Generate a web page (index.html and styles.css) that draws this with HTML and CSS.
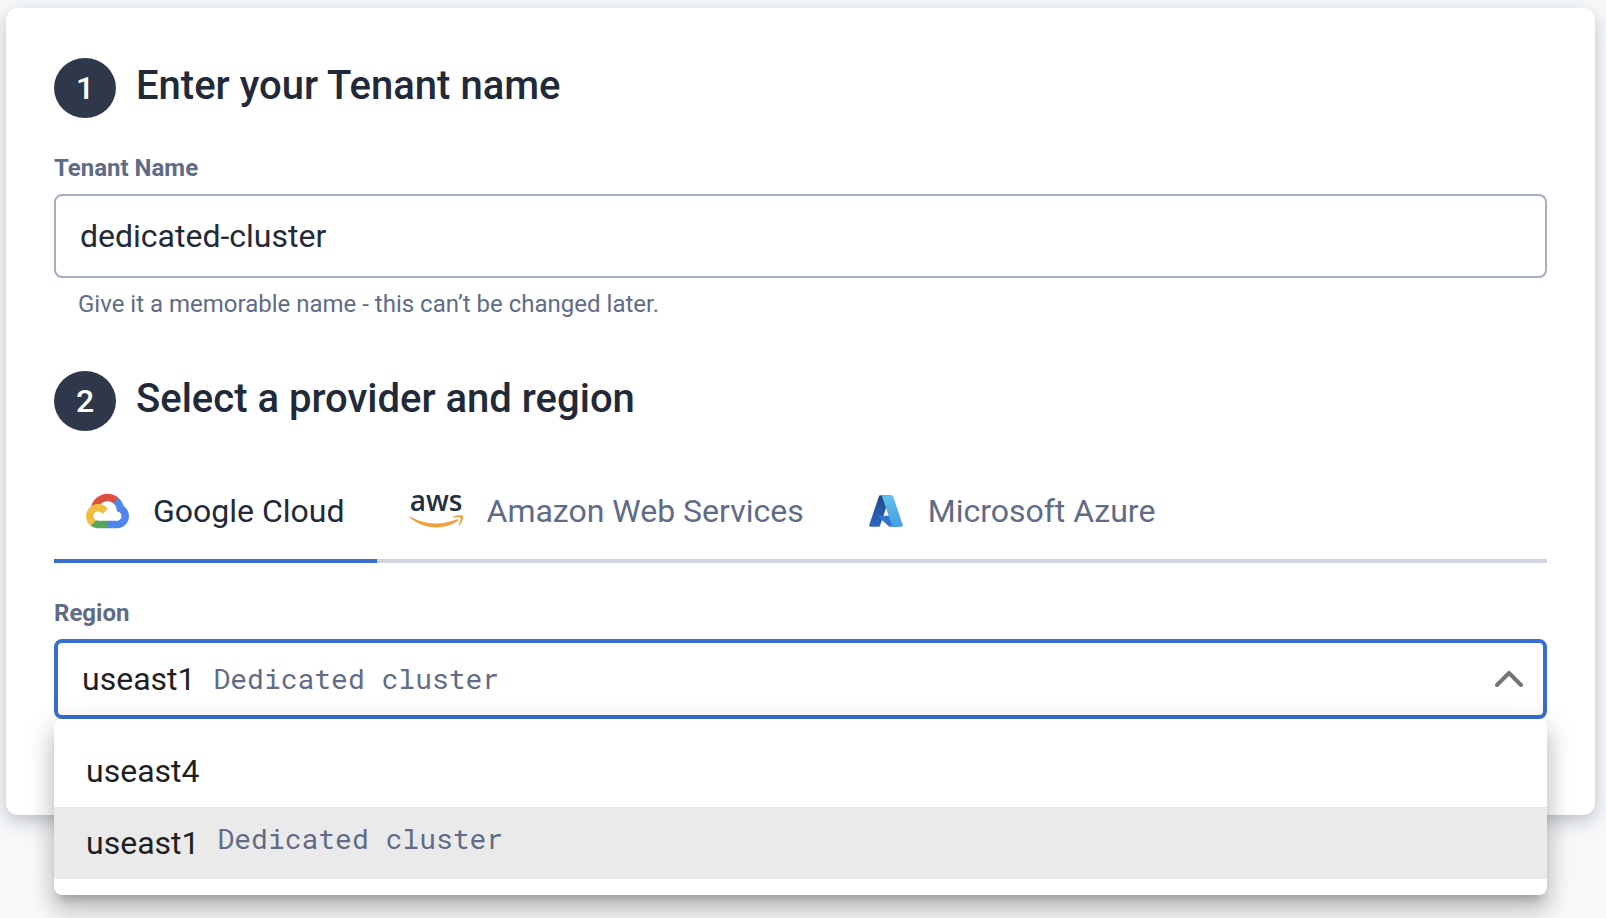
FILE: index.html
```html
<!DOCTYPE html>
<html lang="en">
<head>
<meta charset="utf-8">
<meta name="viewport" content="width=device-width, initial-scale=1">
<title>Create Tenant</title>
<link rel="stylesheet" href="styles.css">
</head>
<body>
<main class="card">
  <section class="step">
    <header class="step-header">
      <span class="step-number">1</span>
      <h2 class="step-title">Enter your Tenant name</h2>
    </header>
    <div class="field">
      <label class="label" for="tenant-name">Tenant Name</label>
      <input class="input" id="tenant-name" type="text" value="dedicated-cluster" aria-describedby="tenant-help">
      <p class="help" id="tenant-help">Give it a memorable name - this can’t be changed later.</p>
    </div>
  </section>

  <section class="step">
    <header class="step-header">
      <span class="step-number">2</span>
      <h2 class="step-title">Select a provider and region</h2>
    </header>
    <div class="tabs" role="tablist">
      <button class="tab tab-active" type="button" role="tab" aria-selected="true">
        <svg class="logo-google" viewBox="0 0 256 206" aria-hidden="true">
          <path fill="#db5140" d="M170.25 56.82 192.5 34.57 193.99 25.2C153.44-11.68 88.98-7.5 52.42 33.92 42.27 45.42 34.73 59.76 30.72 74.57L38.69 73.45 83.19 66.11 86.63 62.6C106.42 40.85 139.9 37.93 162.76 56.43Z"/>
          <path fill="#5086ec" d="M224.2 73.92C219.09 55.08 208.59 38.15 193.99 25.2L162.76 56.43C175.94 67.2 183.46 83.44 183.13 100.47V106.01C198.49 106.01 210.93 118.45 210.93 133.81 210.93 149.16 198.49 161.29 183.13 161.29H127.46L122 167.22V200.56L127.46 205.8H183.13C223.06 206.11 255.69 174.3 256 134.37 256.19 110.17 244.25 87.48 224.2 73.92Z"/>
          <path fill="#58a55d" d="M71.87 205.8H127.46V161.29H71.87C67.91 161.29 64.07 160.44 60.47 158.79L52.58 161.21 30.18 183.46 28.22 191.04C40.79 200.53 56.12 205.86 71.87 205.8Z"/>
          <path fill="#f2be42" d="M71.87 61.43C31.94 61.66-.24 94.23 0 134.16 .13 156.46 10.55 177.45 28.22 191.04L60.47 158.79C46.48 152.47 40.26 136.01 46.58 122.02 52.9 108.03 69.37 101.81 83.36 108.13 89.52 110.91 94.46 115.85 97.25 122.02L129.49 89.77C115.77 71.83 94.45 61.34 71.87 61.43Z"/>
        </svg>
        <span>Google Cloud</span>
      </button>
      <button class="tab" type="button" role="tab" aria-selected="false">
        <svg class="logo-aws" viewBox="0 -16 54 66" aria-hidden="true">
          <text class="aws-text" x="27" y="17" text-anchor="middle">aws</text>
          <g fill="#f2a03b" transform="translate(0 1) scale(.179)">
            <path d="M273.5 143.7c-32.9 24.3-80.7 37.2-121.8 37.2-57.6 0-109.5-21.3-148.7-56.7-3.1-2.8-.3-6.6 3.4-4.4 42.4 24.6 94.7 39.5 148.8 39.5 36.5 0 76.6-7.6 113.5-23.2 5.5-2.5 10.2 3.6 4.8 7.6z"/>
            <path d="M287.2 128.1c-4.2-5.4-27.8-2.6-38.5-1.3-3.2.4-3.7-2.4-.8-4.5 18.8-13.2 49.7-9.4 53.3-5 3.6 4.5-1 35.4-18.6 50.2-2.7 2.3-5.3 1.1-4.1-1.9 4-9.9 12.9-32.2 8.7-37.5z"/>
          </g>
        </svg>
        <span>Amazon Web Services</span>
      </button>
      <button class="tab" type="button" role="tab" aria-selected="false">
        <svg class="logo-azure" viewBox="4 6 88 84" aria-hidden="true">
          <defs>
            <linearGradient id="azure-left" x1="43" y1="13" x2="16" y2="92" gradientUnits="userSpaceOnUse"><stop offset="0" stop-color="#214a8c"/><stop offset="1" stop-color="#3168c0"/></linearGradient>
            <linearGradient id="azure-right" x1="46" y1="10" x2="76" y2="89" gradientUnits="userSpaceOnUse"><stop offset="0" stop-color="#61c1ec"/><stop offset="1" stop-color="#4a9ce4"/></linearGradient>
          </defs>
          <path fill="url(#azure-left)" d="M33.338 6.544h26.038l-27.03 80.087a4.152 4.152 0 0 1-3.933 2.824H8.149a4.145 4.145 0 0 1-3.928-5.47L29.404 9.368a4.152 4.152 0 0 1 3.934-2.825z"/>
          <path fill="#3474cc" d="M71.175 60.261h-41.29a1.911 1.911 0 0 0-1.305 3.309l26.532 24.764a4.171 4.171 0 0 0 2.846 1.121h23.38z"/>
          <path fill="url(#azure-right)" d="M66.595 9.364a4.145 4.145 0 0 0-3.928-2.82H33.648a4.146 4.146 0 0 1 3.928 2.82l25.184 74.62a4.146 4.146 0 0 1-3.928 5.472h29.02a4.146 4.146 0 0 0 3.927-5.472z"/>
        </svg>
        <span>Microsoft Azure</span>
      </button>
    </div>
    <div class="field">
      <label class="label" id="region-label" for="region">Region</label>
      <div class="select">
        <button class="select-button" id="region" type="button" role="combobox" aria-haspopup="listbox" aria-expanded="true" aria-controls="region-list">
          <span>useast1</span>
          <span class="cluster-tag">Dedicated cluster</span>
          <svg class="chevron" viewBox="0 0 28 16" aria-hidden="true"><path d="M2 14 14 2l12 12"/></svg>
        </button>
        <ul class="menu" id="region-list" role="listbox" aria-labelledby="region-label">
          <li class="option" role="option" aria-selected="false">useast4</li>
          <li class="option option-selected" role="option" aria-selected="true">
            <span>useast1</span>
            <span class="cluster-tag">Dedicated cluster</span>
          </li>
        </ul>
      </div>
    </div>
  </section>
</main>
</body>
</html>
```
FILE: styles.css
```css
* {
  box-sizing: border-box;
}

body {
  min-height: 100vh;
  margin: 0;
  padding: 8px 11px 102px 6px;
  background: #f7f9fb;
  color: #222939;
  font-family: Roboto, "Liberation Sans", sans-serif;
  font-size: 32px;
  line-height: 40px;
}

.card {
  display: flex;
  flex-direction: column;
  gap: 53px;
  padding: 50px 48px 96px;
  border-radius: 12px;
  background: #fff;
  box-shadow: 0 6px 12px rgba(20, 20, 50, 0.12), 0 6px 28px rgba(20, 25, 40, 0.14);
}

.step-header {
  display: flex;
  align-items: flex-start;
  gap: 20px;
}

.step-number {
  display: grid;
  place-items: center;
  width: 62px;
  height: 60px;
  border-radius: 50%;
  background: #2f384b;
  color: #fff;
  font-weight: 500;
}

.step-title {
  margin: 0;
  font-size: 40px;
  font-weight: 500;
  line-height: 56px;
}

.field {
  display: flex;
  flex-direction: column;
  gap: 12px;
  margin-top: 36px;
}

.label {
  color: #5f6b87;
  font-size: 24px;
  font-weight: 700;
  line-height: 28px;
}

.input {
  width: 100%;
  height: 84px;
  padding: 0 24px;
  border: 2px solid #a5afc0;
  border-radius: 8px;
  background: #fff;
  color: inherit;
  font: inherit;
}

.help {
  margin: 0;
  padding: 0 24px;
  color: #5f6b87;
  font-size: 24px;
  line-height: 28px;
}

.tabs {
  display: flex;
  margin-top: 32px;
  box-shadow: inset 0 -4px #cfd4de;
}

.tab {
  display: flex;
  align-items: center;
  gap: 24px;
  height: 100px;
  padding: 0 32px;
  border: 0;
  border-bottom: 4px solid transparent;
  background: none;
  color: #5f6b87;
  font: inherit;
}

.tab-active {
  border-bottom-color: #366fd0;
  color: #222939;
}

.logo-google {
  width: 43px;
  height: 36px;
}

.logo-aws {
  width: 54px;
  height: 66px;
}

.aws-text {
  fill: #252f3e;
  font-family: "Open Sans", sans-serif;
  font-size: 28px;
  font-weight: 600;
}

.logo-azure {
  width: 36px;
  height: 32px;
}

.select {
  position: relative;
}

.select-button {
  display: flex;
  align-items: center;
  gap: 18px;
  width: 100%;
  height: 80px;
  padding: 0 20px 0 24px;
  border: 4px solid #366fd0;
  border-radius: 8px;
  background: #fff;
  color: #1f1f1f;
  font: inherit;
}

.cluster-tag {
  color: #5f6b87;
  font-family: "Roboto Mono", "DejaVu Sans Mono", monospace;
  font-size: 28px;
  line-height: 32px;
}

.chevron {
  width: 28px;
  height: 16px;
  margin-left: auto;
  fill: none;
  stroke: #757575;
  stroke-width: 4;
  stroke-linecap: round;
  stroke-linejoin: round;
}

.menu {
  position: absolute;
  top: 100%;
  left: 0;
  width: 100%;
  margin: 0;
  padding: 16px 0;
  border-radius: 8px;
  background: #fff;
  color: #1f1f1f;
  list-style: none;
  box-shadow: 0 10px 10px -6px rgba(0, 0, 0, 0.2), 0 16px 20px 2px rgba(0, 0, 0, 0.14), 0 6px 28px 4px rgba(0, 0, 0, 0.12);
}

.option {
  display: flex;
  align-items: flex-start;
  gap: 18px;
  padding: 16px 32px;
}

.option-selected {
  background: #eaeaea;
}
```
